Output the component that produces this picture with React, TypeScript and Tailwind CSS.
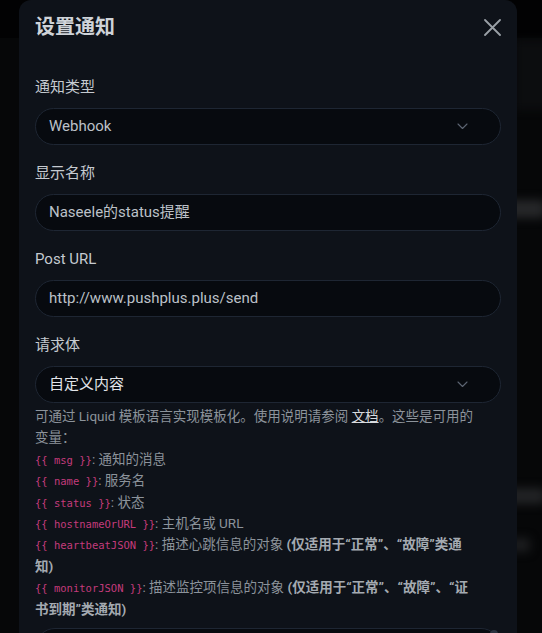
import React from 'react';

const sans = "font-['Roboto','Noto_Sans_CJK_SC',sans-serif]";

function Label({ children }: { children: React.ReactNode }) {
  return <div className="h-6 mb-[9px] text-[15px] leading-6 text-[#c5cad0]">{children}</div>;
}

function Chevron() {
  return (
    <svg width="11" height="7" viewBox="0 0 11 7" fill="none" className="text-[#5d6573]">
      <path d="M1 1l4.5 4.5L10 1" stroke="currentColor" strokeWidth="1.1" strokeLinecap="round" strokeLinejoin="round" />
    </svg>
  );
}

function Field({ value, select, bright, last }: { value: string; select?: boolean; bright?: boolean; last?: boolean }) {
  return (
    <div
      className={`flex items-center h-[37px] rounded-full border border-[#1e2633] bg-[#070a0f] pl-[13px] pr-[32px] ${last ? '' : 'mb-4'}`}
    >
      <span className={`flex-1 text-[15px] ${bright ? 'text-[#e2e5e9]' : 'text-[#bcc1c8]'}`}>{value}</span>
      {select && <Chevron />}
    </div>
  );
}

function Code({ children }: { children: React.ReactNode }) {
  return (
    <code className="font-['DejaVu_Sans_Mono',monospace] text-[10.5px] leading-none text-[#c43b7c]">{`{{ ${children} }}`}</code>
  );
}

export default function App() {
  const vars: { key: string; desc: string; note?: string }[] = [
    { key: 'msg', desc: '通知的消息' },
    { key: 'name', desc: '服务名' },
    { key: 'status', desc: '状态' },
    { key: 'hostnameOrURL', desc: '主机名或 URL' },
    { key: 'heartbeatJSON', desc: '描述心跳信息的对象 ', note: '(仅适用于“正常”、“故障”类通知)' },
    { key: 'monitorJSON', desc: '描述监控项信息的对象 ', note: '(仅适用于“正常”、“故障”、“证书到期”类通知)' },
  ];

  return (
    <div className={`relative h-[633px] w-[542px] overflow-hidden bg-[#060708] ${sans}`}>
      {/* blurred page behind the overlay */}
      <div className="absolute inset-x-0 top-0 h-[38px] bg-[#020203]" />
      <div className="absolute left-[515px] top-[40px] h-[70px] w-[40px] bg-[#0c0d0f] blur-[4px]" />
      <div className="absolute left-[505px] top-[200px] h-[18px] w-[40px] rounded bg-[#262729] blur-[5px]" />
      <div className="absolute left-[505px] top-[488px] h-[16px] w-[40px] rounded bg-[#222325] blur-[5px]" />
      <div className="absolute left-[510px] top-[538px] h-[14px] w-[20px] rounded bg-[#1c1d1f] blur-[5px]" />

      {/* modal */}
      <div className="relative ml-[19px] w-[498px] rounded-t-xl bg-[#0e1219] px-4 pt-3">
        <div className="flex items-center justify-between h-[30px]">
          <h5 className="text-[20px] font-semibold leading-[30px] text-[#cfd3d8]">设置通知</h5>
          <svg width="17" height="17" viewBox="0 0 17 17" className="text-[#9aa0a7]">
            <path d="M1 1l15 15M16 1L1 16" stroke="currentColor" strokeWidth="1.8" strokeLinecap="round" />
          </svg>
        </div>

        <div className="mt-[33px]">
          <Label>通知类型</Label>
          <Field value="Webhook" select />

          <Label>显示名称</Label>
          <Field value="Naseele的status提醒" />

          <Label>Post URL</Label>
          <Field value="http://www.pushplus.plus/send" />

          <Label>请求体</Label>
          <Field value="自定义内容" select bright last />

          <div className="mt-[3px] pr-[23px] text-[13.5px] leading-[21.4px] text-[#8c939b]">
            <p>
              可通过 Liquid 模板语言实现模板化。使用说明请参阅{' '}
              <span className="underline text-[#d7dade]">文档</span>。这些是可用的变量：
            </p>
            <ul>
              {vars.map((v) => (
                <li key={v.key}>
                  <Code>{v.key}</Code>: {v.desc}
                  {v.note && <b className="font-bold text-[#a4aab1]">{v.note}</b>}
                </li>
              ))}
            </ul>
          </div>

          <div className="relative mt-2 h-[60px] rounded-t-[20px] border border-[#1e2633] bg-[#070a0f]">
            <div className="absolute right-[2px] top-[1px] h-[8px] w-[8px] rounded-full bg-[#2a3340]" />
          </div>
        </div>
      </div>
    </div>
  );
}
